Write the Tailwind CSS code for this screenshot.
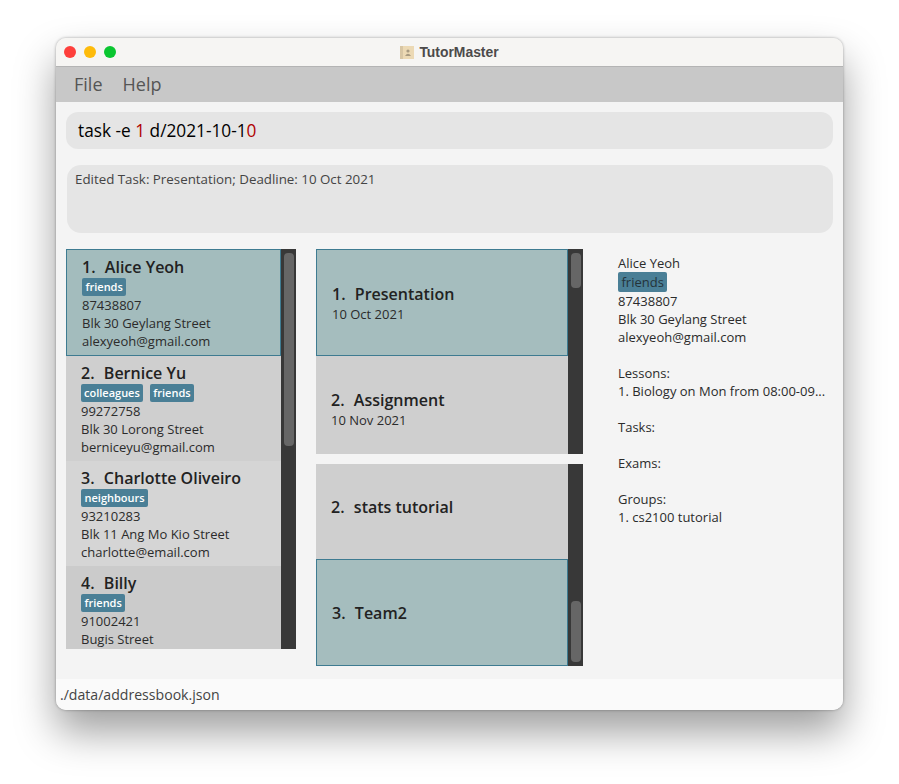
<!DOCTYPE html>
<html lang="en">
<head>
  <meta charset="UTF-8" />
  <title>TutorMaster</title>
  <script src="https://cdn.jsdelivr.net/npm/@tailwindcss/browser@4"></script>
</head>
<body class="bg-white font-['Open_Sans',sans-serif] h-[784px] overflow-hidden">

  <!-- Window -->
  <div class="ml-[56px] mt-[38px] w-[787px] h-[672px] flex flex-col rounded-[10px] overflow-hidden bg-[#f4f4f4] shadow-[0_22px_40px_rgba(0,0,0,0.38),0_0_3px_rgba(0,0,0,0.35)]">

    <!-- Title bar -->
    <div class="relative h-[29px] shrink-0 flex items-center justify-center bg-[#f6f5f3] border-b border-[#b4b4b4]">
      <div class="absolute left-[8px] top-[8px] flex gap-[8px]">
        <span class="w-[12px] h-[12px] rounded-full bg-[#fe3f3b]"></span>
        <span class="w-[12px] h-[12px] rounded-full bg-[#febb0a]"></span>
        <span class="w-[12px] h-[12px] rounded-full bg-[#0ac630]"></span>
      </div>
      <svg class="mr-[5px]" width="14" height="13" viewBox="0 0 14 13">
        <rect width="14" height="13" fill="#ecd9b4" />
        <rect width="3" height="13" fill="#d8c6a4" />
        <circle cx="8" cy="5" r="1.6" fill="#a89a80" />
        <path d="M5 10 Q8 5.5 11 10 Z" fill="#a89a80" />
      </svg>
      <span class="font-['Liberation_Sans',sans-serif] font-bold text-[13.9px] text-[#4c4a4a]">TutorMaster</span>
    </div>

    <!-- Menu bar -->
    <div class="h-[35px] shrink-0 flex items-center gap-[20px] pl-[18px] bg-[#c8c8c8] text-[18px] text-[#555]">
      <span>File</span>
      <span>Help</span>
    </div>

    <!-- Command box -->
    <div class="mt-[10px] ml-[10px] mr-[10px] h-[37px] shrink-0 flex items-center pl-[12px] rounded-[12px] bg-[#e5e5e5] text-[17.25px] text-black">
      <span>task -e <span class="text-[#b00000]">1</span> d/2021-10-1<span class="text-[#b00000]">0</span></span>
    </div>

    <!-- Result box -->
    <div class="mt-[16px] ml-[11px] mr-[10px] h-[68px] shrink-0 pl-[8px] pt-[6px] rounded-[14px] bg-[#e5e5e5] text-[13.33px] leading-[17px] text-[#444]">
      Edited Task: Presentation; Deadline: 10 Oct 2021
    </div>

    <!-- Main columns -->
    <div class="mt-[16px] flex flex-1 min-h-0 pl-[10px]">

      <!-- Student list -->
      <div class="w-[230px] h-[400px] shrink-0 flex overflow-hidden">
        <div class="w-[215px] shrink-0 text-[13px] leading-[18px] text-[#2b2b2b]">
          <div class="h-[107px] pl-[15px] pt-[7px] bg-[#a3bcbd] border border-[#3e7b91]">
            <div class="text-[16px] leading-[21px] font-semibold text-[#222]"><span class="mr-[1px]">1.</span>&nbsp; Alice Yeoh</div>
            <div class="flex gap-[7px]"><span class="h-[18px] px-[3.5px] rounded-[2px] bg-[#4a7f96] text-[11px] font-semibold text-white">friends</span></div>
            <div>87438807</div>
            <div>Blk 30 Geylang Street</div>
            <div>alexyeoh@gmail.com</div>
          </div>
          <div class="h-[105px] pl-[15px] pt-[7px] bg-[#cfcfcf]">
            <div class="text-[16px] leading-[21px] font-semibold text-[#222]"><span class="mr-[1px]">2.</span>&nbsp; Bernice Yu</div>
            <div class="flex gap-[7px]">
              <span class="h-[18px] px-[3px] rounded-[2px] bg-[#4a7f96] text-[11px] font-semibold text-white">colleagues</span>
              <span class="h-[18px] px-[3.5px] rounded-[2px] bg-[#4a7f96] text-[11px] font-semibold text-white">friends</span>
            </div>
            <div>99272758</div>
            <div>Blk 30 Lorong Street</div>
            <div>berniceyu@gmail.com</div>
          </div>
          <div class="h-[105px] pl-[15px] pt-[7px] bg-[#d5d5d5]">
            <div class="text-[16px] leading-[21px] font-semibold text-[#222]"><span class="mr-[1px]">3.</span>&nbsp; Charlotte Oliveiro</div>
            <div class="flex gap-[7px]"><span class="h-[18px] px-[3.5px] rounded-[2px] bg-[#4a7f96] text-[11px] font-semibold text-white">neighbours</span></div>
            <div>93210283</div>
            <div>Blk 11 Ang Mo Kio Street</div>
            <div>charlotte@email.com</div>
          </div>
          <div class="h-[105px] pl-[15px] pt-[7px] bg-[#cbcbcb]">
            <div class="text-[16px] leading-[21px] font-semibold text-[#222]"><span class="mr-[1px]">4.</span>&nbsp; Billy</div>
            <div class="flex gap-[7px]"><span class="h-[18px] px-[3.5px] rounded-[2px] bg-[#4a7f96] text-[11px] font-semibold text-white">friends</span></div>
            <div>91002421</div>
            <div>Bugis Street</div>
          </div>
        </div>
        <div class="w-[15px] shrink-0 bg-[#383838] pt-[4px] pl-[3px]">
          <div class="w-[10px] h-[193px] rounded-[4px] bg-[#666]"></div>
        </div>
      </div>

      <!-- Lessons and tasks -->
      <div class="ml-[20px] w-[267px] shrink-0 flex flex-col gap-[10px]">
        <div class="h-[205px] flex overflow-hidden">
          <div class="w-[252px] shrink-0">
            <div class="h-[107px] pt-[34px] pl-[15px] bg-[#a5bdbe] border border-[#3e7b91]">
              <div class="text-[16px] leading-[21px] font-semibold text-[#222]"><span class="mr-[1px]">1.</span>&nbsp; Presentation</div>
              <div class="text-[13px] leading-[18px] text-[#2b2b2b]">10 Oct 2021</div>
            </div>
            <div class="h-[98px] pt-[34px] pl-[15px] bg-[#cfcfcf]">
              <div class="text-[16px] leading-[21px] font-semibold text-[#222]"><span class="mr-[1px]">2.</span>&nbsp; Assignment</div>
              <div class="text-[13px] leading-[18px] text-[#2b2b2b]">10 Nov 2021</div>
            </div>
          </div>
          <div class="w-[15px] shrink-0 bg-[#383838] pt-[4px] pl-[3px]">
            <div class="w-[10px] h-[35px] rounded-[4px] bg-[#666]"></div>
          </div>
        </div>
        <div class="h-[202px] flex overflow-hidden">
          <div class="w-[252px] shrink-0">
            <div class="h-[95px] pt-[33px] pl-[15px] bg-[#cfcfcf] text-[16px] leading-[21px] font-semibold text-[#222]"><span class="mr-[1px]">2.</span>&nbsp; stats tutorial</div>
            <div class="h-[107px] flex items-center pl-[15px] bg-[#a5bdbe] border border-[#3e7b91] text-[16px] font-semibold text-[#222]"><span class="mr-[1px]">3.</span>&nbsp;&nbsp;Team2</div>
          </div>
          <div class="w-[15px] shrink-0 bg-[#383838] flex flex-col justify-end pb-[4px] pl-[3px]">
            <div class="w-[10px] h-[61px] rounded-[4px] bg-[#666]"></div>
          </div>
        </div>
      </div>

      <!-- Student details -->
      <div class="ml-[35px] pt-[5px] w-[215px] text-[13px] leading-[18px] text-[#2b2b2b]">
        <div>Alice Yeoh</div>
        <div class="flex"><span class="h-[20px] px-[3.5px] rounded-[2px] bg-[#4a7f96] text-[#24333a] leading-[20px]">friends</span></div>
        <div>87438807</div>
        <div>Blk 30 Geylang Street</div>
        <div>alexyeoh@gmail.com</div>
        <div class="mt-[18px]">Lessons:</div>
        <div>1. Biology on Mon from 08:00-09...</div>
        <div class="mt-[18px]">Tasks:</div>
        <div class="mt-[18px]">Exams:</div>
        <div class="mt-[18px]">Groups:</div>
        <div>1. cs2100 tutorial</div>
      </div>
    </div>

    <!-- Status bar -->
    <div class="h-[31px] shrink-0 flex items-center pl-[4px] bg-[#fafafa] text-[14.1px] text-[#444]">./data/addressbook.json</div>
  </div>
</body>
</html>
